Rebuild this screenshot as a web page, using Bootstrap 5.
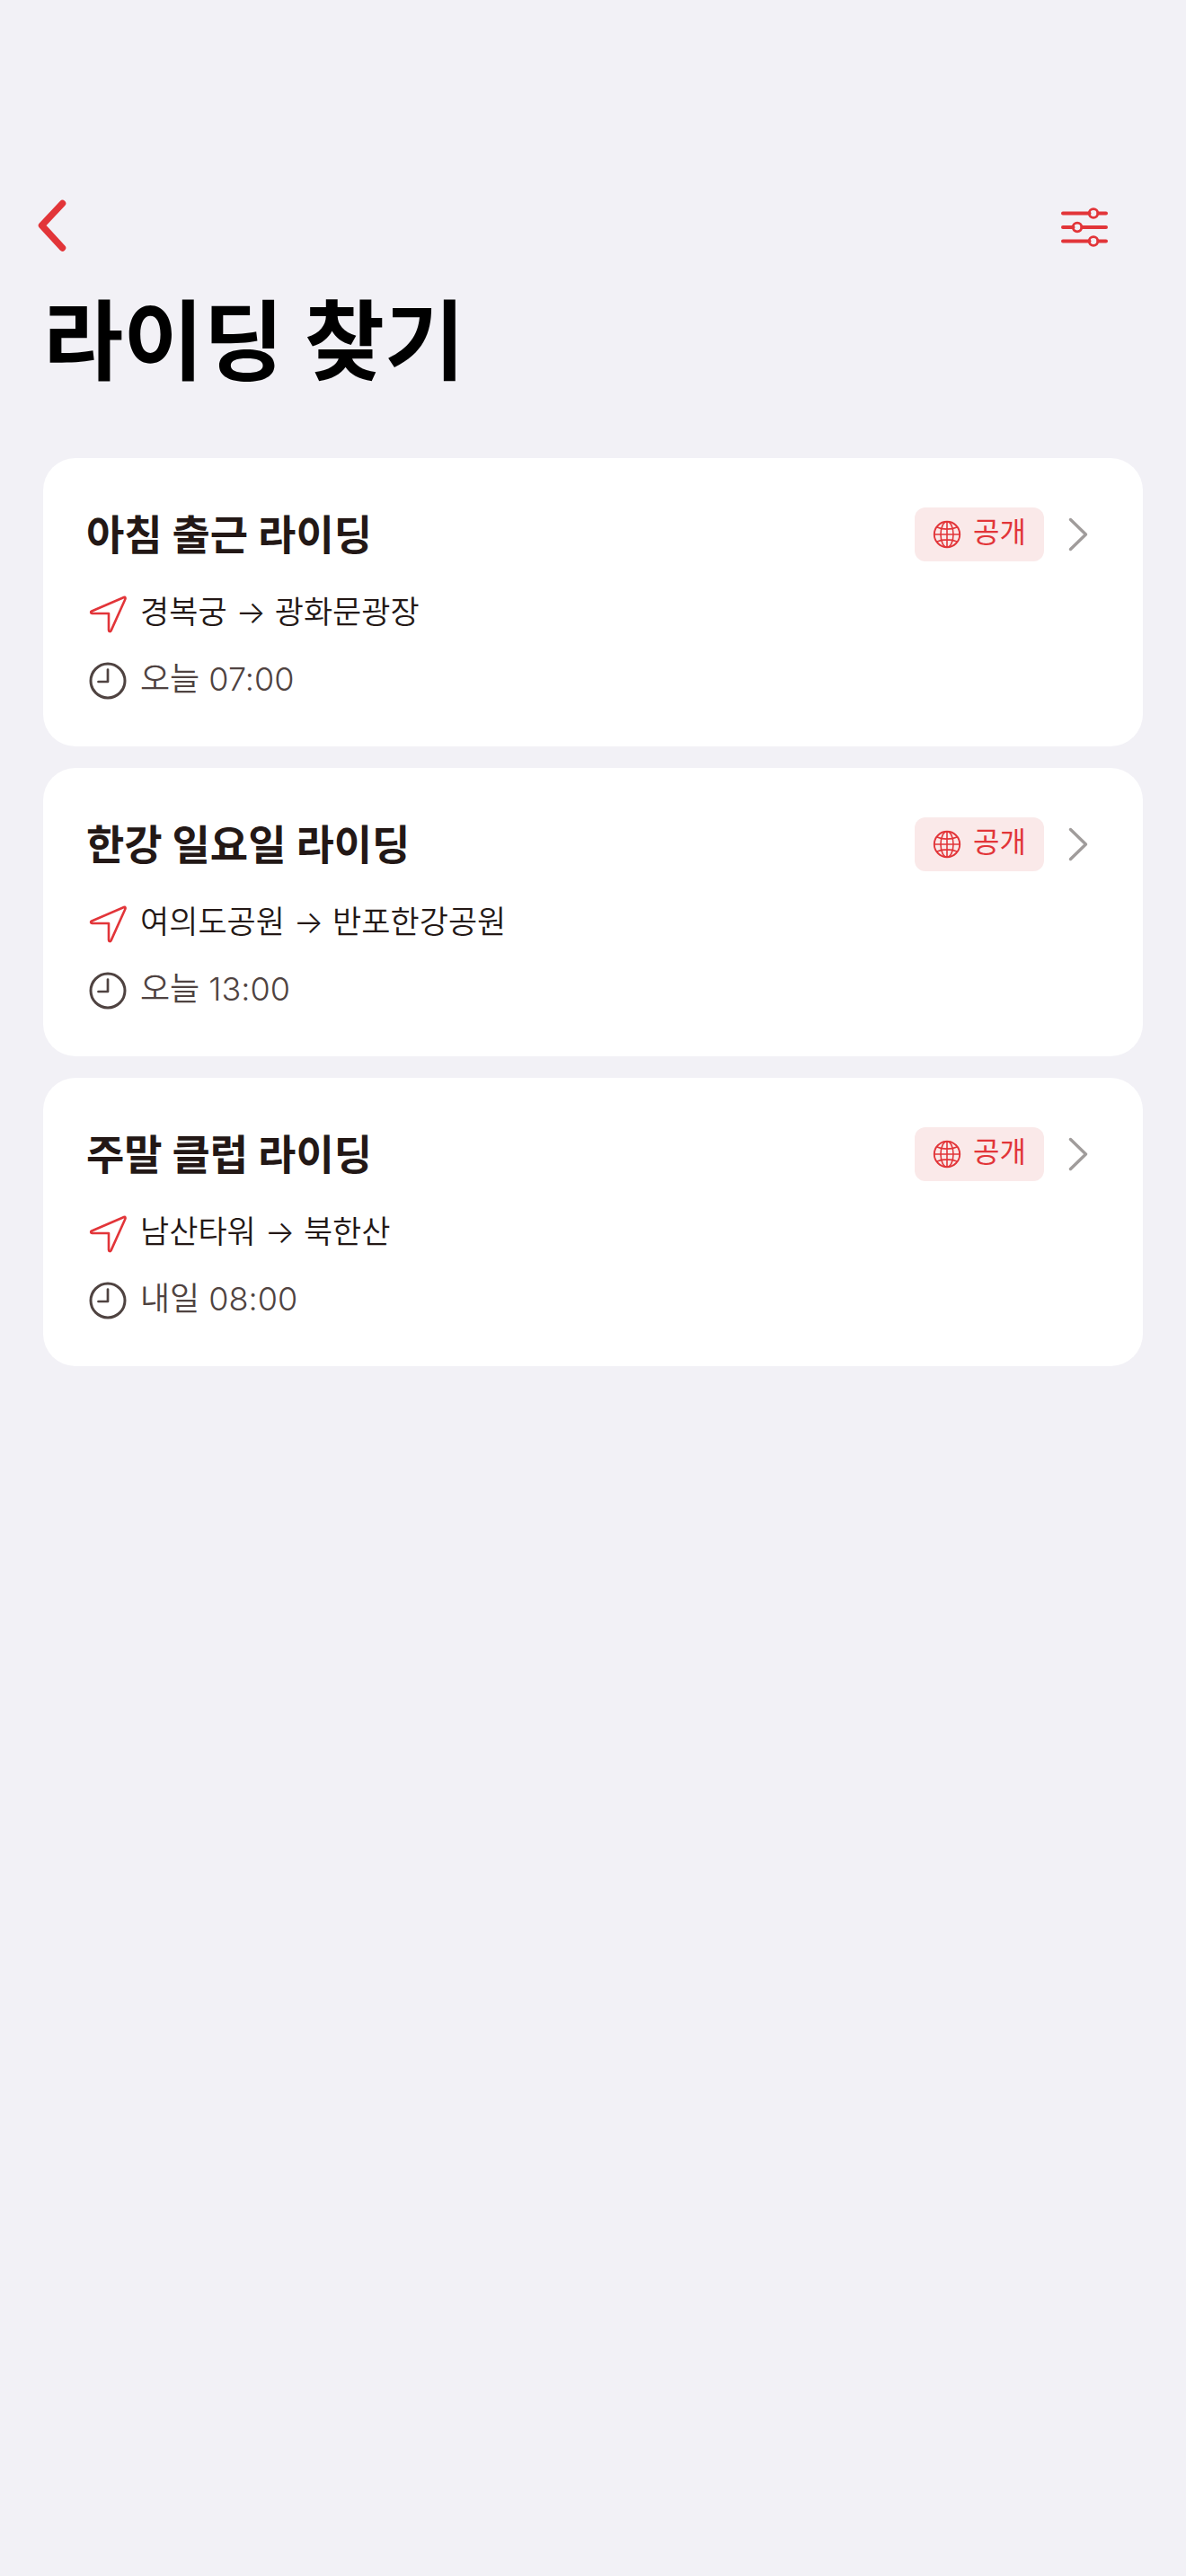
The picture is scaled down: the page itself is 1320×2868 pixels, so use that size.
<!DOCTYPE html>
<html lang="ko">
<head>
<meta charset="utf-8">
<meta name="viewport" content="width=device-width, initial-scale=1">
<title>라이딩 찾기</title>
<link href="https://cdn.jsdelivr.net/npm/bootstrap@5.3.0/dist/css/bootstrap.min.css" rel="stylesheet">
<style>
  :root { --ride-red: #e23539; --ride-ink: #231816; --ride-muted: #4f4341; }
  body { background: #f2f1f6; color: var(--ride-ink); font-family: Inter, "Noto Sans CJK KR", sans-serif; }
  svg { display: block; flex: none; fill: none; stroke-linecap: round; stroke-linejoin: round; }
  .screen { padding: 216px 48px 48px; }
  .icon-btn { padding: 0; border: 0; line-height: 1; color: var(--ride-red); }
  .topbar { height: 72px; margin-left: -8px; margin-right: 36px; }
  .page-title { margin: 26px 0 64px; font-size: 97px; line-height: 132px; font-weight: 700; color: #000; }
  .ride-list { gap: 24px; }
  .ride-card { display: block; padding: 55px 60px 48px 48px; border-radius: 36px; background: #fff; color: inherit; text-decoration: none; }
  .ride-head { height: 60px; margin-bottom: 32px; }
  .ride-name { font-size: 46px; line-height: 60px; font-weight: 700; }
  .ride-rows { gap: 24px; }
  .ride-row { gap: 12px; height: 51px; font-size: 35px; line-height: 48px; font-weight: 350; }
  .ride-row span { padding-bottom: 4px; }
  .ride-time { color: var(--ride-muted); font-size: 36px; }
  .route-icon { color: var(--ride-red); }
  .ride-side { gap: 26px; }
  .scope-tag { gap: 13px; height: 60px; padding: 0 20px; border-radius: 12px; background: #fae9e9; color: var(--ride-red); font-size: 32px; line-height: 48px; }
  .scope-tag span { padding-bottom: 4px; }
  .chev { color: #a09c9b; }
</style>
<script src="https://cdn.jsdelivr.net/npm/bootstrap@5.3.0/dist/js/bootstrap.bundle.min.js"></script>
</head>
<body>
<svg width="0" height="0" class="d-none" aria-hidden="true">
  <symbol id="route" viewBox="0 0 48 48"><path d="M42 6 6 21.500c-1.500.8-1 2.500.5 2.500H25v18.500c0 1.800 1.800 2.200 2.600.6L43.300 8.200C44 6.600 43.400 5.400 42 6Z" stroke="currentColor" stroke-width="2.600"/></symbol>
  <symbol id="clock" viewBox="0 0 48 48"><circle cx="24" cy="24" r="19" stroke="currentColor" stroke-width="3"/><path d="M24 11.500V25H13.500" stroke="currentColor" stroke-width="2.700"/></symbol>
  <symbol id="globe" viewBox="0 0 32 32"><g stroke="currentColor" stroke-width="1.600"><circle cx="16" cy="16" r="14.200" stroke-width="1.900"/><ellipse cx="16" cy="16" rx="7" ry="14.200"/><path d="M16 2v28M2 16h28M5 8c6 2.800 16 2.800 22 0M5 24c6-2.800 16-2.800 22 0"/></g></symbol>
  <symbol id="chevron" viewBox="0 0 24 42"><path d="M3.500 4.500 20.500 21 3.500 37.500" stroke="currentColor" stroke-width="3.400"/></symbol>
</svg>
<main class="screen">
  <nav class="topbar d-flex justify-content-between align-items-center">
    <button type="button" class="btn icon-btn" aria-label="뒤로">
      <svg width="40" height="64" viewBox="0 0 40 64"><path d="M26.500 6.500 3.500 31l23 25" transform="translate(3 0)" stroke="currentColor" stroke-width="7.500"/></svg>
    </button>
    <button type="button" class="btn icon-btn" aria-label="필터">
      <svg width="60" height="48" viewBox="0 0 60 48"><g stroke="currentColor" stroke-width="4"><path d="M7 9.500h29.500M46.500 9.500H55M7 25h11.500M28.500 25H55M7 40.500h29.500M46.500 40.500H55"/><g stroke-width="2.800"><circle cx="41" cy="9.500" r="4.800"/><circle cx="23" cy="25" r="4.800"/><circle cx="41" cy="40.500" r="4.800"/></g></g></svg>
    </button>
  </nav>
  <h1 class="page-title">라이딩 찾기</h1>
  <div class="ride-list d-flex flex-column">
    <a href="#" class="ride-card">
      <div class="ride-head d-flex justify-content-between align-items-center">
        <h2 class="ride-name m-0">아침 출근 라이딩</h2>
        <div class="ride-side d-flex align-items-center">
          <span class="scope-tag d-flex align-items-center"><svg width="32" height="32"><use href="#globe"/></svg><span>공개</span></span>
          <svg class="chev" width="24" height="42"><use href="#chevron"/></svg>
        </div>
      </div>
      <div class="ride-rows d-flex flex-column">
        <div class="ride-row d-flex align-items-center"><svg class="route-icon" width="48" height="48"><use href="#route"/></svg><span>경복궁 → 광화문광장</span></div>
        <div class="ride-row ride-time d-flex align-items-center"><svg width="48" height="48"><use href="#clock"/></svg><span>오늘 07:00</span></div>
      </div>
    </a>
    <a href="#" class="ride-card">
      <div class="ride-head d-flex justify-content-between align-items-center">
        <h2 class="ride-name m-0">한강 일요일 라이딩</h2>
        <div class="ride-side d-flex align-items-center">
          <span class="scope-tag d-flex align-items-center"><svg width="32" height="32"><use href="#globe"/></svg><span>공개</span></span>
          <svg class="chev" width="24" height="42"><use href="#chevron"/></svg>
        </div>
      </div>
      <div class="ride-rows d-flex flex-column">
        <div class="ride-row d-flex align-items-center"><svg class="route-icon" width="48" height="48"><use href="#route"/></svg><span>여의도공원 → 반포한강공원</span></div>
        <div class="ride-row ride-time d-flex align-items-center"><svg width="48" height="48"><use href="#clock"/></svg><span>오늘 13:00</span></div>
      </div>
    </a>
    <a href="#" class="ride-card">
      <div class="ride-head d-flex justify-content-between align-items-center">
        <h2 class="ride-name m-0">주말 클럽 라이딩</h2>
        <div class="ride-side d-flex align-items-center">
          <span class="scope-tag d-flex align-items-center"><svg width="32" height="32"><use href="#globe"/></svg><span>공개</span></span>
          <svg class="chev" width="24" height="42"><use href="#chevron"/></svg>
        </div>
      </div>
      <div class="ride-rows d-flex flex-column">
        <div class="ride-row d-flex align-items-center"><svg class="route-icon" width="48" height="48"><use href="#route"/></svg><span>남산타워 → 북한산</span></div>
        <div class="ride-row ride-time d-flex align-items-center"><svg width="48" height="48"><use href="#clock"/></svg><span>내일 08:00</span></div>
      </div>
    </a>
  </div>
</main>
</body>
</html>
